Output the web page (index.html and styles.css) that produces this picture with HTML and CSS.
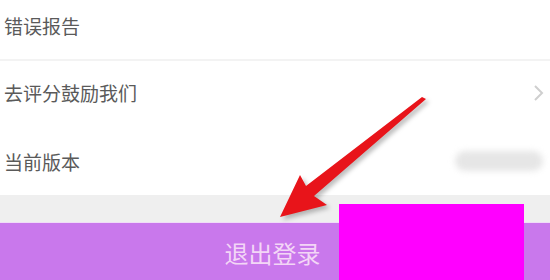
FILE: index.html
```html
<!DOCTYPE html>
<html lang="zh-CN">
<head>
    <meta charset="UTF-8">
    <meta name="viewport" content="width=device-width, initial-scale=1.0">
    <title>设置</title>
    <link rel="stylesheet" href="styles.css">
</head>
<body>
    <div class="page">
        <div class="list">
            <div class="row row-first">错误报告</div>
            <div class="row row-second">
                <span>去评分鼓励我们</span>
                <svg class="chevron" width="14" height="18" viewBox="0 0 14 18">
                    <polyline points="4,2 11,9 4,16" fill="none" stroke="#cfcfcf" stroke-width="2"/>
                </svg>
            </div>
            <div class="row row-third">
                <span>当前版本</span>
                <span class="version"></span>
            </div>
        </div>
        <div class="gap"></div>
        <div class="logout">退出登录</div>

        <!-- annotations on top of the screenshot -->
        <svg class="arrow" width="550" height="280" viewBox="0 0 550 280">
            <polygon points="280,217 300,175 306,186 422,97 426,99 314,196 327,205" fill="#e8141a"/>
        </svg>
        <div class="cover"></div>
    </div>
</body>
</html>
```

FILE: styles.css
```css
body {
    margin: 0;
    background: #fff;
    font-family: "Noto Sans CJK SC", "Noto Sans", sans-serif;
}
.page {
    position: relative;
    width: 550px;
    height: 280px;
    overflow: hidden;
}
.list {
    background: #fff;
}
.row {
    display: flex;
    align-items: center;
    justify-content: space-between;
    padding: 0 5px 0 4px;
    font-size: 19px;
    color: #5a5a5a;
}
.row-first {
    height: 61px;
    padding-bottom: 8px;
    box-sizing: border-box;
    border-bottom: 2px solid #f3f3f3;
}
.row-second {
    height: 66px;
    padding-bottom: 4px;
    box-sizing: border-box;
}
.row-third {
    height: 68px;
}
.chevron {
    margin-top: 2px;
}
.version {
    width: 88px;
    height: 20px;
    margin-right: 2px;
    border-radius: 10px;
    background: #e6e6e6;
    filter: blur(3px);
}
.gap {
    height: 27px;
    background: #efefef;
}
.logout {
    height: 58px;
    border-top: 1px solid #f1dcf8;
    background: #c978ec;
    color: #f3d6f6;
    font-size: 24px;
    display: flex;
    align-items: center;
    justify-content: center;
    padding-right: 5px;
    padding-bottom: 0;
}
.arrow {
    position: absolute;
    left: 0;
    top: 0;
    filter: drop-shadow(3px 3px 2px rgba(0, 0, 0, 0.25));
}
.cover {
    position: absolute;
    left: 339px;
    top: 204px;
    width: 185px;
    height: 76px;
    background: #ff00ff;
}
```
